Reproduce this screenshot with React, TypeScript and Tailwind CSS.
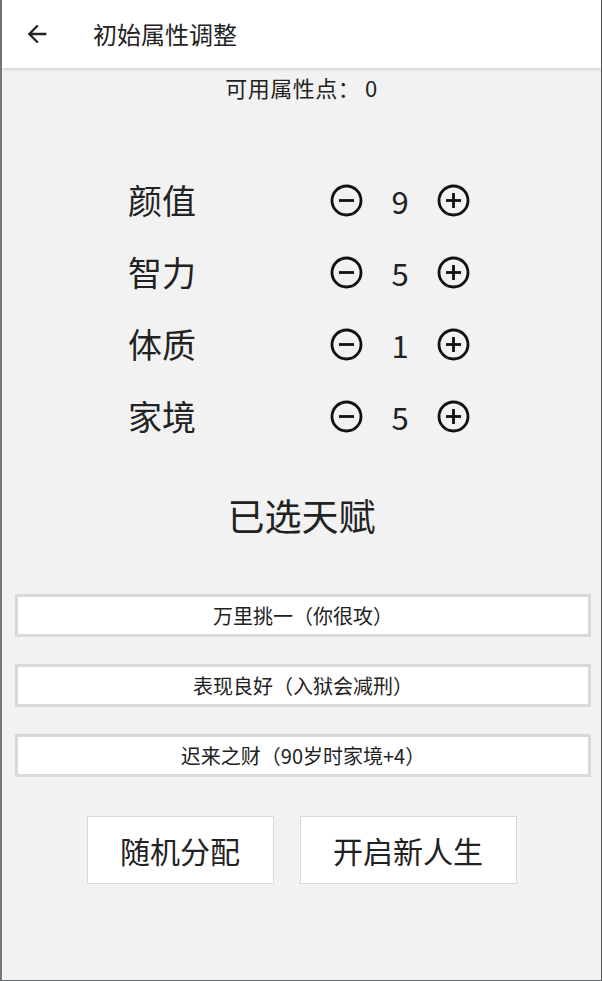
import type { ReactNode } from 'react'

const attrs = [
  { name: '颜值', value: 9 },
  { name: '智力', value: 5 },
  { name: '体质', value: 1 },
  { name: '家境', value: 5 },
]

const talents = ['万里挑一（你很攻）', '表现良好（入狱会减刑）', '迟来之财（90岁时家境+4）']

function CircleIcon({ children }: { children: ReactNode }) {
  return (
    <svg className="w-[33px] h-[33px]" viewBox="0 0 33 33" fill="none" stroke="#111" strokeWidth={2.8}>
      <circle cx="16.5" cy="16.5" r="14.5" />
      {children}
    </svg>
  )
}

export default function App() {
  return (
    <div
      className="w-[602px] h-[981px] bg-[#f2f2f2] border-l-2 border-l-[#6e7c82] border-r border-r-[#5a5a5a] border-b border-b-[#5f6a6e] flex flex-col text-[#222]"
      style={{ fontFamily: '"Noto Sans CJK SC", "Noto Sans", sans-serif' }}
    >
      {/* Top bar */}
      <div className="h-[68px] bg-white flex items-center shadow-[0_1px_4px_rgba(0,0,0,0.18)] relative z-10">
        <svg className="w-[28px] h-[28px] ml-[21px]" viewBox="0 0 24 24" fill="#222">
          <path d="M20 11H7.83l5.59-5.59L12 4l-8 8 8 8 1.41-1.41L7.83 13H20v-2z" />
        </svg>
        <span className="ml-[42px] text-[24px] leading-none">初始属性调整</span>
      </div>

      <p className="mt-[5px] text-[22px] leading-[28px] text-center tracking-[0.5px]">可用属性点：&thinsp;0</p>

      {/* Attribute rows */}
      <div className="mt-[63px] flex flex-col">
        {attrs.map((a) => (
          <div key={a.name} className="h-[72px] flex items-center pl-[126px]">
            <span className="w-[202px] text-[34px] leading-none">{a.name}</span>
            <CircleIcon>
              <line x1="9" y1="16.5" x2="24" y2="16.5" />
            </CircleIcon>
            <span className="w-[74px] text-center text-[31px] leading-none">{a.value}</span>
            <CircleIcon>
              <line x1="9" y1="16.5" x2="24" y2="16.5" />
              <line x1="16.5" y1="9" x2="16.5" y2="24" />
            </CircleIcon>
          </div>
        ))}
      </div>

      <p className="mt-[38px] text-[37px] leading-[50px] text-center">已选天赋</p>

      {/* Talents */}
      <div className="mt-[54px] flex flex-col gap-[27px] pl-[13px] pr-[10px]">
        {talents.map((t) => (
          <div
            key={t}
            className="h-[43px] bg-white border-[3px] border-[#d9d9d9] flex items-center justify-center text-[20px]"
          >
            {t}
          </div>
        ))}
      </div>

      {/* Actions */}
      <div className="mt-[39px] flex justify-center gap-[26px]">
        <button className="w-[187px] h-[68px] bg-white border border-[#d9d9d9] text-[30px]">随机分配</button>
        <button className="w-[217px] h-[68px] bg-white border border-[#d9d9d9] text-[30px]">开启新人生</button>
      </div>
    </div>
  )
}
